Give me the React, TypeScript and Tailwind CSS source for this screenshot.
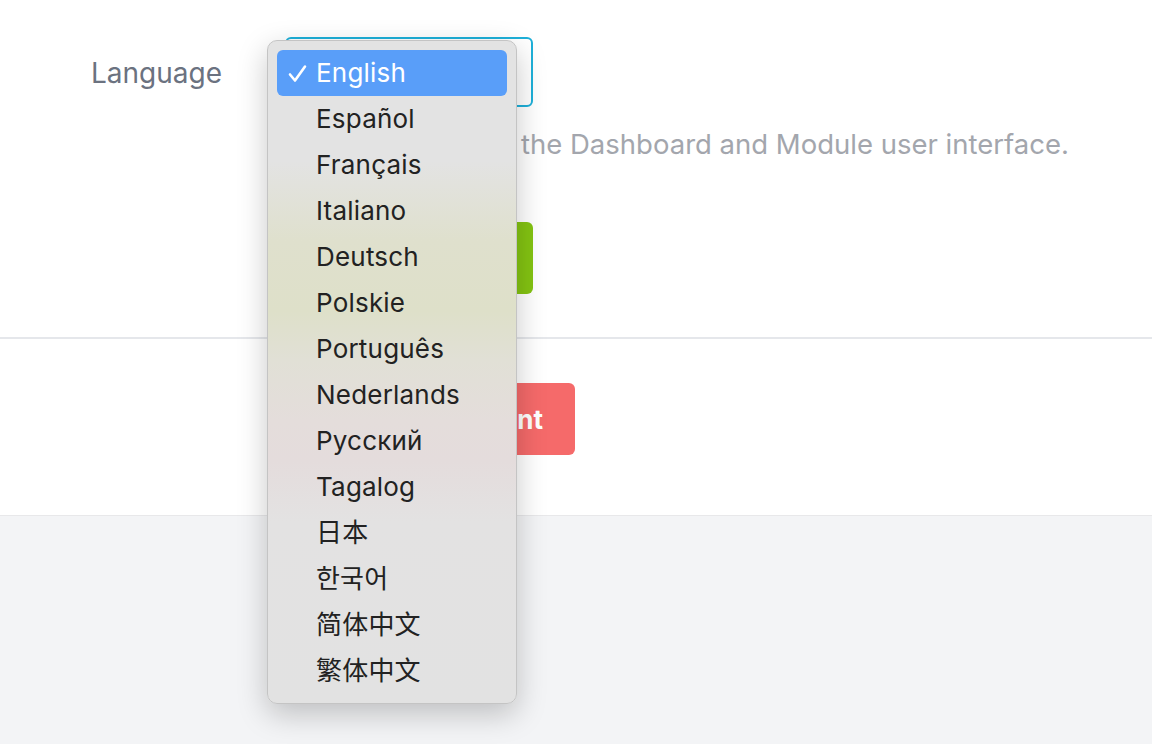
import React from "react";

const langs = [
  "English",
  "Español",
  "Français",
  "Italiano",
  "Deutsch",
  "Polskie",
  "Português",
  "Nederlands",
  "Русский",
  "Tagalog",
  "日本",
  "한국어",
  "简体中文",
  "繁体中文",
];

export default function App() {
  return (
    <div className="relative w-[1152px] h-[744px] overflow-hidden bg-[#f3f4f6] font-['Inter',sans-serif]">
      <div className="bg-white border-b border-[#e8e8ea]">
        {/* section 1 */}
        <div className="h-[339px] border-b-2 border-[#e5e7eb] flex pt-[37px]">
          <div className="w-[285px] pl-[91px] pt-[18px] text-[28px] text-[#6b7280] leading-[36px]">
            Language
          </div>
          <div className="flex flex-col">
            <div className="w-[248px] h-[70px] rounded-[6px] border-2 border-[#1eb0d9] bg-white flex items-center px-4 text-[24px] text-[#374151]">
              English
            </div>
            <div className="mt-[21px] h-[32px] text-[27.5px] text-[#a3a6ad] leading-[32px] whitespace-nowrap">
              <span className="inline-block w-[236px] align-top">Language used in</span>
              <span>the Dashboard and Module user interface.</span>
            </div>
            <div className="h-[72px] w-[248px] mt-[62px] rounded-[6px] bg-[#84c412] flex items-center justify-center text-white font-bold text-[24px]">
              Save
            </div>
          </div>
        </div>
        {/* section 2 */}
        <div className="h-[176px] flex items-start pt-[44px] pl-[285px]">
          <div className="h-[72px] w-[290px] rounded-[6px] bg-[#f56a6a] flex items-center justify-end pr-[32px] text-white font-bold text-[26px]">
            Delete Account
          </div>
        </div>
      </div>

      {/* native dropdown menu */}
      <div className="absolute left-[267px] top-[40px] w-[250px] h-[664px] rounded-[10px] border border-[#c4c4c4] bg-[linear-gradient(180deg,#e3e3e3_0px,#e3e3e3_120px,#dfe0cd_200px,#dee0c9_270px,#e1e0d6_320px,#e4dddb_380px,#e4dcdc_420px,#e3e2e2_480px,#e2e2e2_100%)] shadow-[0_10px_30px_rgba(0,0,0,0.22)] p-[9px] font-['Inter','Noto_Sans_CJK_SC',sans-serif]">
        {langs.map((l, i) => (
          <div
            key={l}
            className={
              i === 0
                ? "h-[46px] rounded-[6px] bg-[#599ef9] text-white flex items-center text-[26px] leading-none tracking-[0.2px]"
                : "h-[46px] flex items-center text-[26px] text-[#222222] leading-none tracking-[0.2px]"
            }
          >
            <span className="w-[39px] pl-[11px] flex items-center">
              {i === 0 ? (
                <svg width="19" height="19" viewBox="0 0 19 19" fill="none">
                  <path d="M2 10.5 L7 16.5 L17 2.5" stroke="white" strokeWidth="2.6" strokeLinecap="round" strokeLinejoin="round" />
                </svg>
              ) : null}
            </span>
            <span>{l}</span>
          </div>
        ))}
      </div>
    </div>
  );
}
